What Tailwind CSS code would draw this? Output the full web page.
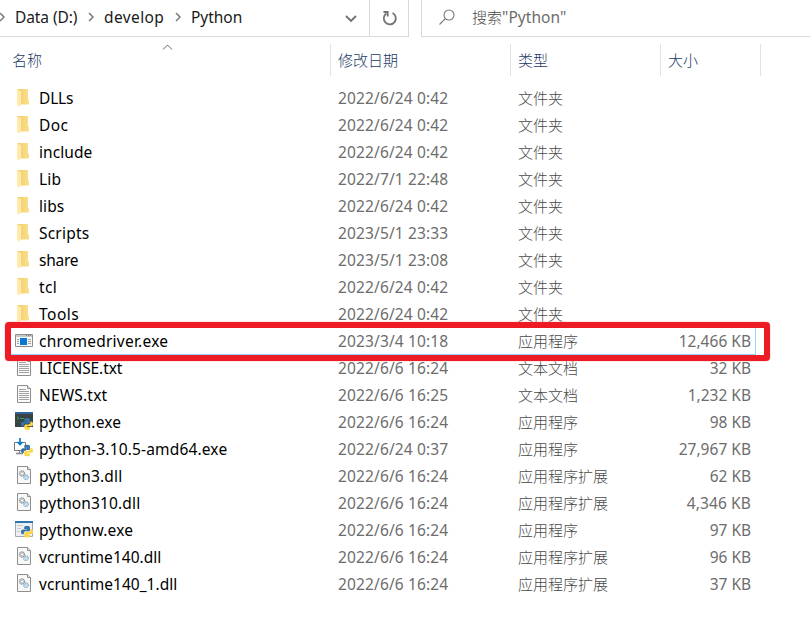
<!DOCTYPE html>
<html lang="zh-CN">
<head>
<meta charset="utf-8">
<title>Python</title>
<script src="https://cdn.jsdelivr.net/npm/@tailwindcss/browser@4"></script>
</head>
<body class="bg-white w-[810px] h-[637px] overflow-hidden font-['Noto_Sans','Noto_Sans_CJK_SC',sans-serif] text-[15px]">
<svg class="absolute w-0 h-0">
  <defs>
    <linearGradient id="gold" x1="0" x2="1"><stop offset="0" stop-color="#f0cd6c"/><stop offset="1" stop-color="#fbdf8d"/></linearGradient>
    <symbol id="folder" viewBox="0 0 20 20"><path d="M4 2h11v10.500h1v5H4z" fill="url(#gold)"/><path d="M4 2l4 2.200v12L6.600 19.500 4 18z" fill="#ffe9ab"/></symbol>
    <symbol id="snake" viewBox="0 0 12 12">
      <path d="M6 0C3.800 0 3.200.8 3.200 2v1.200h3v.6H2C.6 3.800 0 4.800 0 6.200s.7 2.400 1.800 2.400h1V7.400c0-1.200.8-1.800 1.900-1.800h2.900c.8 0 1.400-.6 1.400-1.400V2C9 .7 7.900 0 6 0z" fill="#3674a8"/>
      <path d="M6.200 12c2.200 0 2.800-.8 2.800-2V8.900H6v-.6h4.200c1.300 0 1.800-1 1.800-2.300s-.6-2.600-1.800-2.600h-.8v1.200c0 1.200-.8 1.800-1.900 1.800H4.800c-.9 0-1.500.6-1.500 1.400V10c0 1.300 1.100 2 2.900 2z" fill="#ffd445"/>
    </symbol>
    <symbol id="app" viewBox="0 0 20 20"><path d="M2.500 4.500h17v12h-17z" fill="#f8f8f8" stroke="#8c8c8c"/><path d="M3 5h16v2H3z" fill="#c5c9cc"/><path d="M13 5.500h1m1 0h1m1 0h1" stroke="#777"/><path d="M7 8h7v7H7z" fill="#0878d4"/><path d="M4 9.500h2M4 11.500h2M4 13.500h2M15 9.500h3M15 11.500h3M15 13.500h3" stroke="#a3a3a3"/></symbol>
    <symbol id="txt" viewBox="0 0 20 20"><path d="M4.500 1.500h10l3 3v14h-13z" fill="#fafafa" stroke="#8e8e8e"/><path d="M14.500 1.500v3h3" fill="#e7e7e7" stroke="#8e8e8e"/><path d="M6 5.500h7M6 7.500h10M6 9.500h10M6 11.500h10M6 13.500h10M6 15.500h10" stroke="#a2a2a2"/></symbol>
    <symbol id="dll" viewBox="0 0 20 20"><path d="M4.500 1.500h10l3 3v14h-13z" fill="#f8f8f8" stroke="#8e8e8e"/><path d="M14.500 1.500v3h3" fill="#e7e7e7" stroke="#8e8e8e"/><circle cx="9" cy="8.500" r="2.500" fill="none" stroke="#92979b" stroke-width="1.300" stroke-dasharray="1.300 .45"/><circle cx="9" cy="8.500" r="1.400" fill="#fff" stroke="#888" stroke-width=".5"/><circle cx="13" cy="12.200" r="2.200" fill="none" stroke="#7fafd0" stroke-width="1.300" stroke-dasharray="1.200 .45"/><circle cx="13" cy="12.200" r="1.200" fill="#fff" stroke="#6f9fc5" stroke-width=".5"/></symbol>
    <symbol id="pyexe" viewBox="0 0 20 20"><path d="M2 1h18v15H2z" fill="#384247"/><path d="M2 1h18v2H2z" fill="#2f679a"/><path d="M4 5.500l2 1.500L4 8.500M7 7.500h4" fill="none" stroke="#3a9a50"/><path d="M4 11h4" stroke="#355d40"/><use href="#snake" x="8" y="7" width="12" height="12"/></symbol>
    <symbol id="setup" viewBox="0 0 20 20"><path d="M1.500 4.500h11v8h-11z" fill="#fff" stroke="#777"/><path d="M6.500 13v2.500M3 15.500h7" stroke="#888" stroke-width="1.300"/><path d="M7 0v6.500M4.500 4L7 6.500 9.500 4" fill="none" stroke="#087fd4" stroke-width="1.700"/><use href="#snake" x="8" y="6.500" width="12" height="12"/></symbol>
    <symbol id="pyw" viewBox="0 0 20 20"><path d="M2.500 2.500h17v15h-17z" fill="#edf0f2" stroke="#a2abb1"/><path d="M2 2h18v2H2z" fill="#2f75ae"/><path d="M4 6.500h6M4 9.500h4M4 12.500h3" stroke="#c4c9cc"/><use href="#snake" x="8" y="6.700" width="12" height="12"/></symbol>
  </defs>
</svg>

<header class="flex h-[37px] text-[#1a1a1a]">
  <div class="flex w-[409px] border-b border-r border-[#d9d9d9]">
    <nav class="flex w-[331px] h-[35px] items-center">
      <svg class="w-[5px] h-3 shrink-0" viewBox="0 0 5 12" fill="none" stroke="#777" stroke-width="1.500"><path d="M0 1l4 4-4 4"/></svg>
      <div class="ml-2.5 w-[73px] whitespace-nowrap"><span data-w="62" class="text-[15.5px]">Data (D:)</span></div>
      <svg class="w-[7px] h-3 shrink-0" viewBox="0 0 7 12" fill="none" stroke="#777" stroke-width="1.500"><path d="M1 1l4 4-4 4"/></svg>
      <div class="ml-[9px] w-[70px] whitespace-nowrap"><span data-w="60" class="text-[15.5px]">develop</span></div>
      <svg class="w-[7px] h-3 shrink-0" viewBox="0 0 7 12" fill="none" stroke="#777" stroke-width="1.500"><path d="M2 1l4 4-4 4"/></svg>
      <div class="ml-[10px] whitespace-nowrap"><span data-w="51" class="text-[15.5px]">Python</span></div>
    </nav>
    <div class="flex w-[38px] h-9 items-center justify-center pl-0.5 shrink-0"><svg class="w-3 h-3" viewBox="0 0 12 12" fill="none" stroke="#707070" stroke-width="1.800"><path d="M1 4l5 5 5-5"/></svg></div>
    <div class="flex flex-1 h-9 items-center justify-center border-l border-[#d9d9d9]"><svg class="w-4 h-4 ml-0.5" viewBox="0 0 16 16" fill="none" stroke="#737373" stroke-width="1.800"><path d="M10.500 3A6 6 0 1 1 4.300 3.500M1.500 2h4.200v4.600"/></svg></div>
  </div>
  <div class="ml-3 flex flex-1 h-[37px] border-l border-b border-[#d9d9d9] pl-[17px] text-[#6d6d6d]">
    <svg class="w-4 h-4 mt-[9px]" viewBox="0 0 16 16" fill="none" stroke="#777" stroke-width="1.100"><circle cx="10" cy="6" r="5"/><path d="M6.400 9.600L.5 15.500"/></svg>
    <span class="ml-[17px] mt-[6px] leading-[23px] whitespace-nowrap self-start"><span class="font-light text-[#484848]">搜索</span><span data-w="64" class="text-[15.5px]">"Python"</span></span>
  </div>
</header>

<main>
  <div class="mt-[7px] h-8 flex text-[#1c3a66] leading-[33px] font-light">
    <div class="relative w-[331px] border-r border-[#e2e2e2] pl-3">名称
      <svg class="absolute left-[162px] top-0 w-[11px] h-[7px]" viewBox="0 0 11 7" fill="none" stroke="#666"><path d="M1 5.500L5.500 1 10 5.500"/></svg>
    </div>
    <div class="w-[180px] border-r border-[#e2e2e2] pl-[7px]">修改日期</div>
    <div class="w-[150px] border-r border-[#e2e2e2] pl-[7px]">类型</div>
    <div class="w-[100px] border-r border-[#e2e2e2] pl-[7px]">大小</div>
  </div>
  <div class="relative pt-[9px]">
    <div id="list"></div>
    <div class="absolute left-[5px] top-[246px] w-[765px] h-[39px] border-6 border-[#ed1c24] rounded-[4px] shadow-[0_0_1px_#ed1c24]"></div>
  </div>
</main>

<script>
const rows = [
  ['folder','DLLs',34,'2022/6/24 0:42','文件夹','',0],
  ['folder','Doc',29,'2022/6/24 0:42','文件夹','',0],
  ['folder','include',53,'2022/6/24 0:42','文件夹','',0],
  ['folder','Lib',22,'2022/7/1 22:48','文件夹','',0],
  ['folder','libs',25,'2022/6/24 0:42','文件夹','',0],
  ['folder','Scripts',50,'2023/5/1 23:33','文件夹','',0],
  ['folder','share',39,'2023/5/1 23:08','文件夹','',0],
  ['folder','tcl',18,'2022/6/24 0:42','文件夹','',0],
  ['folder','Tools',40,'2022/6/24 0:42','文件夹','',0],
  ['app','chromedriver.exe',129,'2023/3/4 10:18','应用程序','12,466 KB',72],
  ['txt','LICENSE.txt',83,'2022/6/6 16:24','文本文档','32 KB',41],
  ['txt','NEWS.txt',68,'2022/6/6 16:25','文本文档','1,232 KB',63],
  ['pyexe','python.exe',82,'2022/6/6 16:24','应用程序','98 KB',41],
  ['setup','python-3.10.5-amd64.exe',188,'2022/6/24 0:37','应用程序','27,967 KB',72],
  ['dll','python3.dll',83,'2022/6/6 16:24','应用程序扩展','62 KB',41],
  ['dll','python310.dll',101,'2022/6/6 16:24','应用程序扩展','4,346 KB',64],
  ['pyw','pythonw.exe',94,'2022/6/6 16:24','应用程序','97 KB',41],
  ['dll','vcruntime140.dll',122,'2022/6/6 16:24','应用程序扩展','96 KB',41],
  ['dll','vcruntime140_1.dll',138,'2022/6/6 16:24','应用程序扩展','37 KB',41]
];
document.getElementById('list').innerHTML = rows.map(([icon,name,nw,date,type,size,sw]) => `
  <div class="ml-2 flex w-[748px] h-[27px] leading-[27px] whitespace-nowrap text-[#6d6d6d] ${icon === 'app' ? 'shadow-[inset_-1px_-1px_0_#99d1ff]' : ''}">
    <svg class="ml-[5px] mt-[2px] w-5 h-5 shrink-0"><use href="#${icon}"/></svg>
    <div class="ml-1.5 w-[299px] shrink-0 text-black"><span data-w="${nw}" class="text-[15.5px]">${name}</span></div>
    <div class="w-[180px] shrink-0"><span data-w="110" class="text-[15.5px]">${date}</span></div>
    <div class="w-[120px] shrink-0 font-light text-[#484848]">${type}</div>
    <div class="w-[113px] shrink-0 text-right"><span data-w="${sw}" class="text-[15.5px]">${size}</span></div>
  </div>`).join('');
function track() {
  for (const el of document.querySelectorAll('[data-w]')) {
    const n = el.textContent.length;
    if (!n) continue;
    let spacing = 0.05;
    for (let i = 0; i < 4; i++) {
      el.style.letterSpacing = spacing + 'px';
      spacing += (+el.dataset.w + 0.3 - el.getBoundingClientRect().width) / n;
    }
    el.style.letterSpacing = spacing + 'px';
  }
}
window.addEventListener('load', () => { track(); requestAnimationFrame(track); document.fonts.ready.then(track); });
</script>
</body>
</html>
